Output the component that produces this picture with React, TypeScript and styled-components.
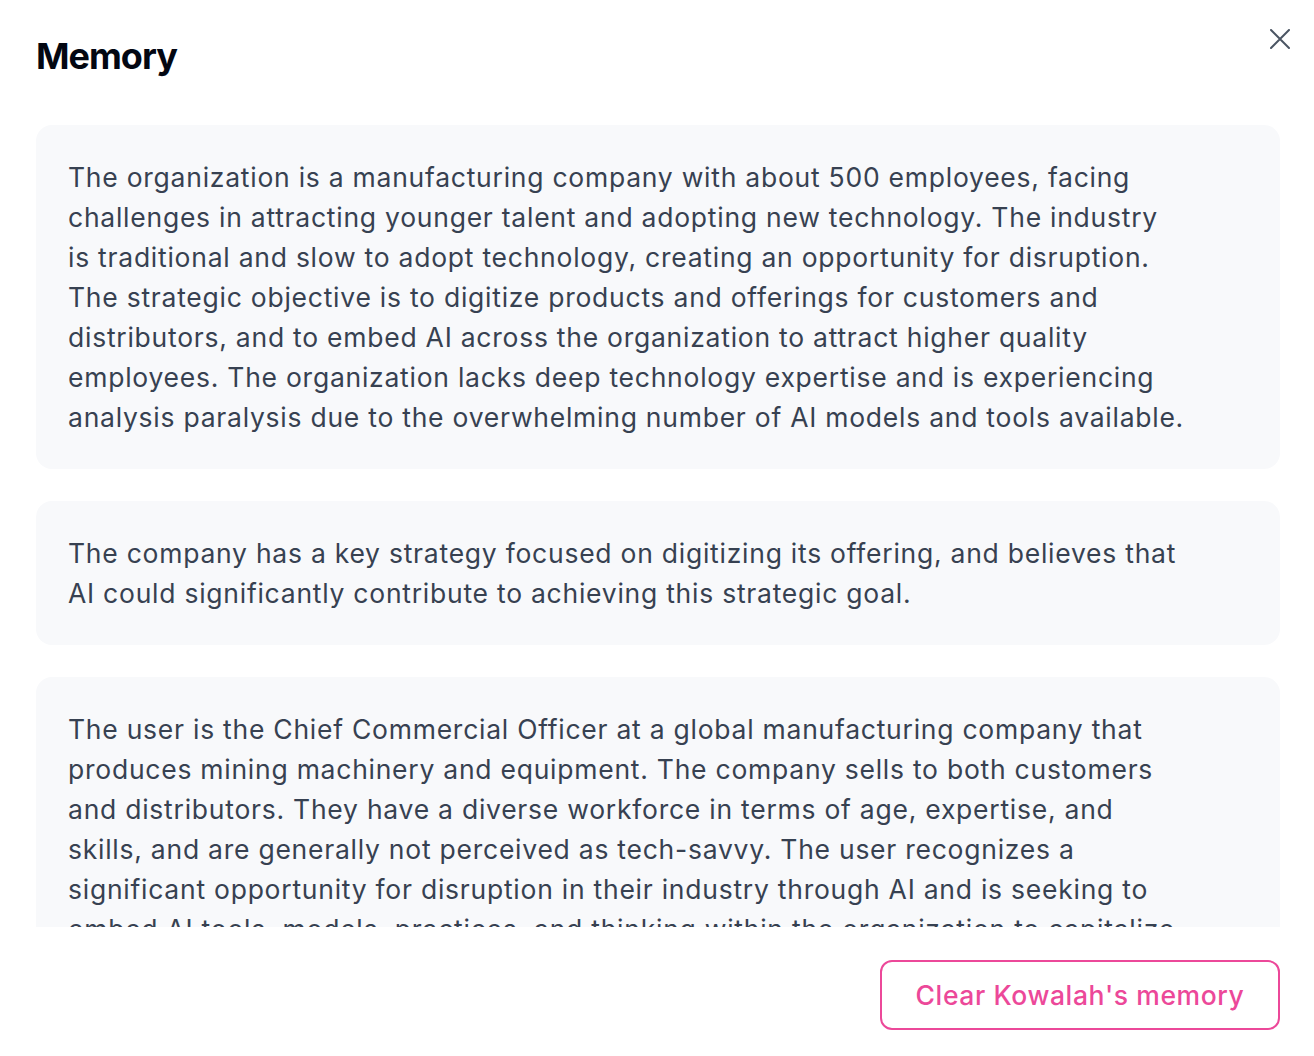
import React from "react";
import styled, { createGlobalStyle } from "styled-components";

const Global = createGlobalStyle`
  html, body { margin: 0; padding: 0; background: #ffffff; }
  body { font-family: Inter, "Noto Sans", sans-serif; -webkit-font-smoothing: antialiased; }
  * { box-sizing: border-box; }
`;

const Modal = styled.div`
  position: relative;
  height: 1056px;
  display: flex;
  flex-direction: column;
  padding: 32px 34px 26px 36px;
  background: #ffffff;
`;

const Header = styled.header`
  display: flex;
  align-items: center;
  height: 48px;
  margin-bottom: 45px;
`;

const Title = styled.h2`
  margin: 0;
  font-size: 36px;
  line-height: 48px;
  font-weight: 700;
  color: #030712;
  letter-spacing: -1px;
`;

const CloseButton = styled.button`
  position: absolute;
  top: 26px;
  right: 21px;
  width: 26px;
  height: 26px;
  padding: 0;
  border: none;
  background: transparent;
  display: flex;
  align-items: center;
  justify-content: center;
  cursor: pointer;
  color: #4b5563;
`;

const Scroll = styled.div`
  flex: 1;
  min-height: 0;
  overflow-y: auto;
  scrollbar-width: none;
  display: flex;
  flex-direction: column;
  gap: 32px;
  &::-webkit-scrollbar { display: none; }
`;

const Card = styled.div`
  flex-shrink: 0;
  background: #f8f9fb;
  border-radius: 16px;
  padding: 32px 32px;
`;

const CardText = styled.p`
  margin: 0;
  max-width: 1117px;
  font-size: 26.5px;
  line-height: 40px;
  letter-spacing: 0.75px;
  color: #374151;
  font-weight: 400;
`;

const Footer = styled.footer`
  display: flex;
  justify-content: flex-end;
  padding-top: 33px;
`;

const ClearButton = styled.button`
  width: 400px;
  height: 70px;
  border: 2px solid #ec4899;
  border-radius: 12px;
  background: #ffffff;
  color: #ec4899;
  font-family: Inter, "Noto Sans", sans-serif;
  font-size: 26.5px;
  font-weight: 500;
  letter-spacing: 0.6px;
  cursor: pointer;
`;

const memories = [
  "The organization is a manufacturing company with about 500 employees, facing challenges in attracting younger talent and adopting new technology. The industry is traditional and slow to adopt technology, creating an opportunity for disruption. The strategic objective is to digitize products and offerings for customers and distributors, and to embed AI across the organization to attract higher quality employees. The organization lacks deep technology expertise and is experiencing analysis paralysis due to the overwhelming number of AI models and tools available.",
  "The company has a key strategy focused on digitizing its offering, and believes that AI could significantly contribute to achieving this strategic goal.",
  "The user is the Chief Commercial Officer at a global manufacturing company that produces mining machinery and equipment. The company sells to both customers and distributors. They have a diverse workforce in terms of age, expertise, and skills, and are generally not perceived as tech-savvy. The user recognizes a significant opportunity for disruption in their industry through AI and is seeking to embed AI tools, models, practices, and thinking within the organization to capitalize on this opportunity and stay ahead of competitors.",
];

export default function App() {
  return (
    <>
      <Global />
      <Modal>
        <Header>
          <Title>Memory</Title>
        </Header>
        <CloseButton aria-label="Close">
          <svg width="20" height="20" viewBox="0 0 20 20" fill="none">
            <path d="M1 1L19 19M19 1L1 19" stroke="currentColor" strokeWidth="2" strokeLinecap="round" />
          </svg>
        </CloseButton>
        <Scroll>
          {memories.map((m, i) => (
            <Card key={i}>
              <CardText>{m}</CardText>
            </Card>
          ))}
        </Scroll>
        <Footer>
          <ClearButton>Clear Kowalah's memory</ClearButton>
        </Footer>
      </Modal>
    </>
  );
}
